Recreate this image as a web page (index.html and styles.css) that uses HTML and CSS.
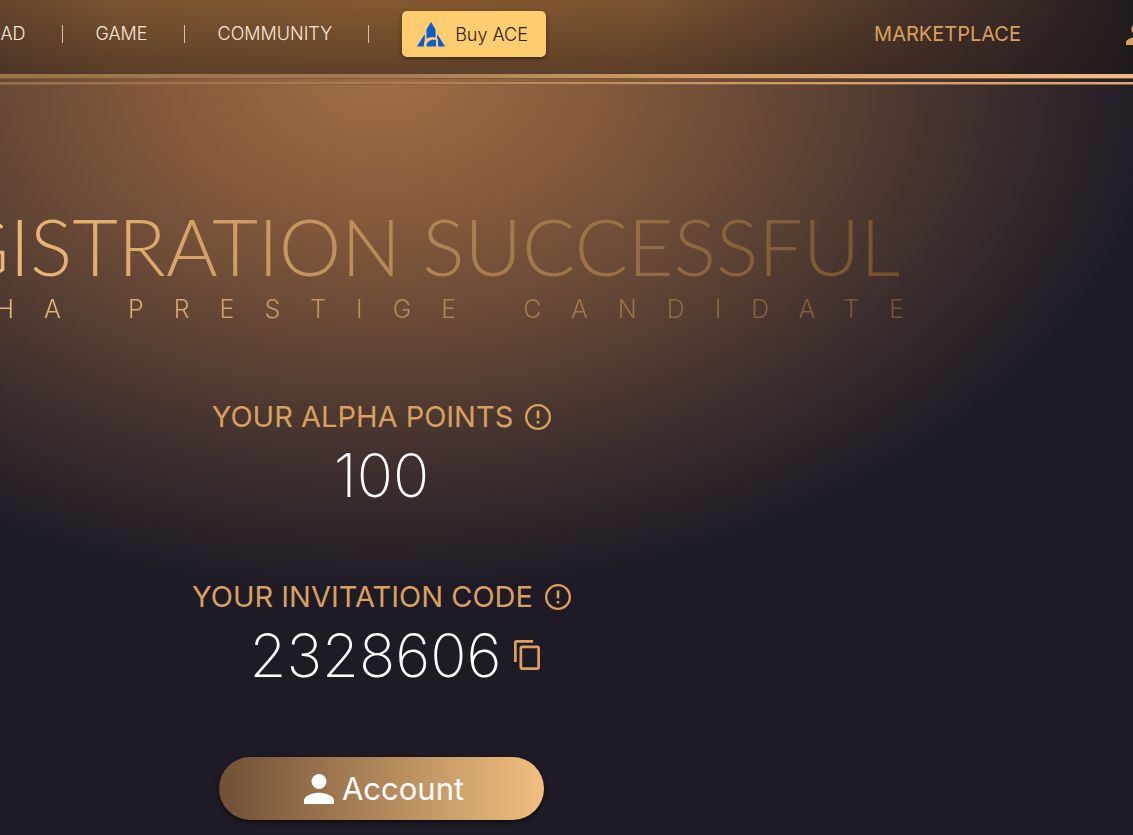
FILE: index.html
```html
<!DOCTYPE html>
<html lang="en">
<head>
<meta charset="utf-8">
<title>Registration successful</title>
<link rel="stylesheet" href="styles.css">
</head>
<body>
<div class="page">
  <header class="header">
    <div class="bar">
      <nav class="nav">
        <a class="nav-link" href="#download">DOWNLOAD</a>
        <a class="nav-link" href="#game">GAME</a>
        <a class="nav-link" href="#community">COMMUNITY</a>
        <button class="buy" type="button">
          <svg class="buy-logo" viewBox="0 0 28 25" aria-hidden="true">
            <path fill="#0b5bd3" d="M14 0 L18.500 7.500 V15.500 Q13.500 14 9.500 16.500 V7.500Z M7.800 12 V18.500 Q6.800 20.500 6.800 24.500 H0Z M20.200 12 L28 24.500 H21 V17.500 L20.200 16.500Z M9.500 24.500 C9.500 19.500 13.500 17.200 19 18 V24.500Z"/>
          </svg>
          Buy ACE
        </button>
      </nav>
      <div class="tools">
        <a class="market" href="#marketplace">MARKETPLACE</a>
        <a class="profile" href="#profile" aria-label="Profile">
          <svg viewBox="4 4 16 16" aria-hidden="true"><path fill="currentColor" d="M12 12a4 4 0 1 0 0-8 4 4 0 0 0 0 8zm0 2c-2.670 0-8 1.340-8 4v2h16v-2c0-2.660-5.330-4-8-4z"/></svg>
        </a>
      </div>
    </div>
    <div class="rule rule-thick"></div>
    <div class="rule rule-thin"></div>
  </header>
  <main class="main">
    <div class="heading">
      <h1 class="title">REGISTRATION SUCCESSFUL</h1>
      <p class="subtitle">ALPHA PRESTIGE CANDIDATE</p>
    </div>
    <section class="stat">
      <h2 class="label">YOUR ALPHA POINTS
        <svg class="info" viewBox="2 2 20 20" aria-hidden="true"><path fill="currentColor" d="M11 15h2v2h-2zm0-8h2v6h-2zm1-5a10 10 0 1 0 0 20 10 10 0 0 0 0-20zm0 18.200a8.200 8.200 0 1 1 0-16.400 8.200 8.200 0 0 1 0 16.400z"/></svg>
      </h2>
      <p class="value">100</p>
    </section>
    <section class="stat">
      <h2 class="label">YOUR INVITATION CODE
        <svg class="info" viewBox="2 2 20 20" aria-hidden="true"><path fill="currentColor" d="M11 15h2v2h-2zm0-8h2v6h-2zm1-5a10 10 0 1 0 0 20 10 10 0 0 0 0-20zm0 18.200a8.200 8.200 0 1 1 0-16.400 8.200 8.200 0 0 1 0 16.400z"/></svg>
      </h2>
      <p class="value">2328606
        <button class="copy" type="button" aria-label="Copy code">
          <svg viewBox="2 1 19 22" aria-hidden="true"><path fill="currentColor" d="M16 1H4a2 2 0 0 0-2 2v14h2V3h12zm3 4H8a2 2 0 0 0-2 2v14c0 1.100.900 2 2 2h11a2 2 0 0 0 2-2V7a2 2 0 0 0-2-2zm0 16H8V7h11z"/></svg>
        </button>
      </p>
    </section>
    <a class="account" href="#account">
      <svg class="account-icon" viewBox="4 4 16 16" aria-hidden="true"><path fill="currentColor" d="M12 12a4 4 0 1 0 0-8 4 4 0 0 0 0 8zm0 2c-2.670 0-8 1.340-8 4v2h16v-2c0-2.660-5.330-4-8-4z"/></svg>
      Account
    </a>
  </main>
</div>
</body>
</html>
```
FILE: styles.css
```css
* { box-sizing: border-box; }

body {
  margin: 0;
  overflow: hidden;
  background: #1e1b26;
  color: #fff;
  font-family: Inter, "Open Sans", sans-serif;
}

h1, h2, p { margin: 0; }
svg { display: block; }
a { color: inherit; text-decoration: none; }

button {
  border: 0;
  padding: 0;
  background: none;
  color: inherit;
  font: inherit;
}

/* The page is scrolled sideways: its left edge lies outside the window. */
.page {
  margin-left: -370px;
  min-height: 100vh;
  background: radial-gradient(ellipse 790px 520px at 50% 76px, #a16e43 0%, #85593a 28%, #644635 51%, #46342f 70%, #30262a 86%, #1e1b26 100%);
}

.bar {
  display: flex;
  align-items: center;
  justify-content: space-between;
  height: 74px;
  padding-bottom: 6px;
  background: linear-gradient(#20180000, #20181855), radial-gradient(ellipse 780px 400px at 50% 0, #855930 0%, #7a522f 35%, #553b2a 60%, #3a2a25 80%, #1d191c 100%);
}

.rule { height: 5px; }
.rule-thick {
  border-bottom: 1px solid #7a5a3c;
  background: linear-gradient(90deg, #9b744a 25%, #a9794f 50%, #dba56f 75%, #f3bb8a 100%);
}
.rule-thin {
  height: 3px;
  margin-top: 3px;
  border-bottom: 1px solid #84623f;
  background: linear-gradient(90deg, #9a6f4d 25%, #ad7b50 50%, #d09a66 75%, #dfa975 100%);
}

.nav {
  display: flex;
  align-items: center;
  padding-left: 290px;
}

.nav-link {
  display: flex;
  align-items: center;
  font-size: 18px;
  font-weight: 300;
  line-height: 24px;
  color: #f8e8dc;
}
.nav-link::after {
  content: "";
  width: 1px;
  height: 18px;
  margin: 0 33px 0 36px;
  background: #d8c0a8;
}

.buy {
  display: flex;
  align-items: center;
  gap: 10px;
  height: 46px;
  padding: 0 18px 0 15px;
  border-radius: 5px;
  background: #ffcd70;
  box-shadow: 0 2px 4px #0006;
  color: #2a2118;
  font-size: 18px;
  font-weight: 300;
}
.buy-logo { width: 28px; height: 25px; }

.tools {
  display: flex;
  align-items: center;
  gap: 105px;
  margin-right: -14px;
  color: #d9a05f;
  font-size: 20px;
}
.profile { width: 21px; }

.main {
  display: flex;
  flex-direction: column;
  align-items: center;
  gap: 66px;
  padding: 115px 0 15px;
}

.heading {
  padding-bottom: 5px;
  white-space: nowrap;
}
.title, .subtitle {
  background: linear-gradient(90deg, #f6c286 0%, #e0ac70 25%, #a97d50 60%, #73502f 100%);
  background-clip: text;
  color: transparent;
}
.title {
  font-family: Lato, Inter, sans-serif;
  font-size: 79px;
  font-weight: 300;
  line-height: 92px;
}
.subtitle {
  margin-right: -30px;
  font-size: 25px;
  font-weight: 300;
  line-height: 34px;
  letter-spacing: 30px;
  text-align: right;
}

.stat {
  display: flex;
  flex-direction: column;
  align-items: center;
  gap: 2px;
}
.label {
  display: flex;
  align-items: center;
  gap: 12px;
  color: #d9a05f;
  font-size: 29px;
  font-weight: 400;
  line-height: 40px;
}
.info { width: 26px; height: 26px; }
.value {
  display: flex;
  align-items: center;
  gap: 12px;
  font-size: 60px;
  font-weight: 200;
  line-height: 72px;
}
.copy {
  width: 26px;
  margin-right: -26px;
  color: #d9a05f;
}

.account {
  display: flex;
  align-items: center;
  justify-content: center;
  gap: 8px;
  width: 325px;
  height: 63px;
  padding-left: 5px;
  border-radius: 32px;
  background: linear-gradient(90deg, #704f35, #f1bf80);
  box-shadow: 0 2px 5px #0008;
  font-size: 31px;
}
.account-icon { width: 30px; height: 30px; }
```
